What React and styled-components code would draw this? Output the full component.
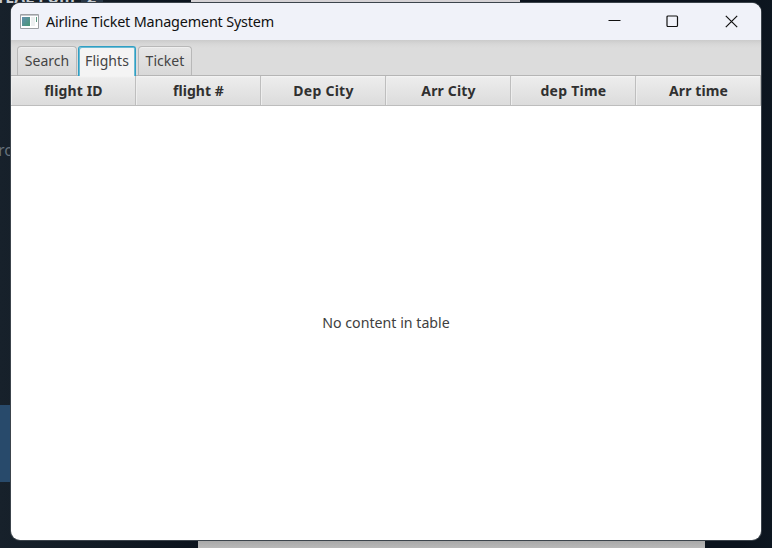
import React from "react";
import styled, { createGlobalStyle, css } from "styled-components";

const GlobalStyle = createGlobalStyle`
  * { box-sizing: border-box; }
  body {
    margin: 0;
    overflow: hidden;
    background: #111a23;
    font-family: "Noto Sans", "Open Sans", sans-serif;
  }
`;

const Desktop = styled.main`
  position: relative;
  width: 772px;
  height: 548px;
  padding: 3px 11px 8px;
  overflow: hidden;
  background: linear-gradient(90deg, #17212b 0, #121b24 100px, #0b131d 200px, #0b131d 740px, #0d1620 772px);
`;

const BackgroundPane = styled.div`
  position: absolute;
  left: ${(p) => p.$x}px;
  top: ${(p) => p.$y}px;
  width: ${(p) => p.$w}px;
  height: ${(p) => p.$h}px;
  background: ${(p) => p.$color};
`;

const BackgroundText = styled.span`
  position: absolute;
  left: ${(p) => p.$x}px;
  top: ${(p) => p.$y}px;
  color: ${(p) => p.$color};
  font: ${(p) => p.$weight} 16px/20px "Noto Sans", sans-serif;
  letter-spacing: ${(p) => p.$spacing || 0}px;
  white-space: nowrap;
`;

const Window = styled.section`
  position: relative;
  display: flex;
  flex-direction: column;
  width: 750px;
  height: 537px;
  overflow: hidden;
  background: #fff;
  border-radius: 9px;
  box-shadow: 0 0 0 1px #3c444c;
`;

const TitleBar = styled.header`
  display: flex;
  align-items: center;
  flex: 0 0 37px;
  padding-left: 9px;
  background: #f0f2f9;
`;

const Title = styled.h1`
  flex: 1;
  margin: 0 0 0 7px;
  color: #111;
  font-size: 14.4px;
  line-height: 20px;
  font-weight: 400;
  letter-spacing: ${(p) => p.$spacing}px;
  white-space: nowrap;
`;

const Controls = styled.div`
  display: flex;
  gap: 1px;
  padding-right: 1px;
`;

const ControlButton = styled.button`
  display: grid;
  place-items: center;
  width: 57.5px;
  height: 36px;
  padding: 0;
  border: 0;
  background: none;
  color: #111;
`;

const TabStrip = styled.nav`
  display: flex;
  align-items: flex-end;
  gap: 1px;
  flex: 0 0 36px;
  padding-left: 6px;
  border-bottom: 1px solid #b5b5b5;
  background: linear-gradient(#cbcbcb 0, #d7d7d7 4px, #dcdcdc 8px);
`;

const Tab = styled.button`
  display: flex;
  align-items: center;
  justify-content: center;
  width: ${(p) => p.$width}px;
  height: 29px;
  padding: 0 0 1px;
  border: 1px solid #b8b8b8;
  border-bottom: 0;
  border-radius: 4px 4px 0 0;
  background: linear-gradient(#e6e6e6, #d8d8d8);
  box-shadow: inset 0 1px #efefef;
  color: #444;
  font: 400 14px/20px "Noto Sans", sans-serif;
  letter-spacing: ${(p) => p.$spacing}px;
  white-space: nowrap;

  ${(p) =>
    p.$active &&
    css`
      height: 30px;
      margin-right: 1px;
      margin-bottom: -1px;
      padding-bottom: 2px;
      border-color: #2f9fc4;
      border-radius: 3px 3px 0 0;
      background: #f4f4f4;
      box-shadow: inset 1px 1px #6dbbd3, inset -1px 0 #6dbbd3;
    `}
`;

const Table = styled.div`
  display: flex;
  flex: 1;
  flex-direction: column;
`;

const TableHeader = styled.div`
  display: grid;
  grid-template-columns: repeat(6, 125px);
  height: 30px;
  border-bottom: 1px solid #bdbdbd;
  background: linear-gradient(#f5f5f5 0, #ececec 2px, #dcdcdc 100%);
`;

const ColumnHeader = styled.div`
  display: flex;
  align-items: center;
  justify-content: center;
  padding-left: 1px;
  border-right: 1px solid #bebebe;
  box-shadow: inset 1px 0 #eee;
  color: #303030;
  font-size: 14px;
  line-height: 20px;
  font-weight: 700;
  letter-spacing: ${(p) => p.$spacing}px;
`;

const Placeholder = styled.div`
  display: grid;
  flex: 1;
  place-items: center;
  color: #404040;
  font-size: 14.2px;
  line-height: 20px;
`;

function AppIcon() {
  return (
    <svg width="19" height="16" viewBox="0 0 19 16" aria-hidden="true">
      <defs>
        <linearGradient id="pane" x2="1" y2="1">
          <stop stopColor="#648fb0" />
          <stop offset="1" stopColor="#479774" />
        </linearGradient>
      </defs>
      <path d="M.5.5h18v14H.5z" fill="#fff" stroke="#9da0a4" />
      <path d="M1 1.5h17" stroke="#c5c8cc" />
      <path d="M2 3h8v9H2z" fill="url(#pane)" />
      <path d="M11 3h4v9h-4z" fill="#edf0f1" />
      <path d="M16.5 3v5" stroke="#5b9b83" />
    </svg>
  );
}

const columns = [
  ["flight ID", 0.15],
  ["flight #", 0.05],
  ["Dep City", 0.25],
  ["Arr City", 0.15],
  ["dep Time", 0.25],
  ["Arr time", 0.1],
];

export default function App() {
  return (
    <>
      <GlobalStyle />
      <Desktop>
        <BackgroundText $x={-4} $y={-13} $color="#c5cbd0" $weight={700}>TEAL FUm</BackgroundText>
        <BackgroundPane $x={81} $y={0} $w={22} $h={3} $color="#293746" />
        <BackgroundText $x={87} $y={-13} $color="#c5cbd0" $weight={700}>2</BackgroundText>
        <BackgroundPane $x={191} $y={0} $w={329} $h={3} $color="#d5d2d5" />
        <BackgroundText $x={-2} $y={140} $color="#65717b" $weight={400}>ro</BackgroundText>
        <BackgroundPane $x={0} $y={405} $w={11} $h={77} $color="#284a6b" />
        <BackgroundPane $x={198} $y={540} $w={507} $h={8} $color="linear-gradient(#a6a6a6, #b8b8b8)" />
        <Window>
          <TitleBar>
            <AppIcon />
            <Title $spacing={-0.18}>Airline Ticket Management System</Title>
            <Controls>
              <ControlButton aria-label="Minimize">
                <svg width="13" height="13" viewBox="0 0 13 13"><path d="M.5 5.5h12" stroke="currentColor" /></svg>
              </ControlButton>
              <ControlButton aria-label="Maximize">
                <svg width="13" height="13" viewBox="0 0 13 13"><rect x="1" y="1" width="10.5" height="10.5" rx="1" fill="none" stroke="currentColor" strokeWidth="1.2" /></svg>
              </ControlButton>
              <ControlButton aria-label="Close">
                <svg width="13" height="13" viewBox="0 0 13 13"><path d="m.8.8 11.4 11.4m0-11.4L.8 12.2" stroke="currentColor" strokeWidth="1.2" /></svg>
              </ControlButton>
            </Controls>
          </TitleBar>
          <TabStrip>
            <Tab $width={60} $spacing={0}>Search</Tab>
            <Tab $width={58} $spacing={0.05} $active>Flights</Tab>
            <Tab $width={54} $spacing={0.05}>Ticket</Tab>
          </TabStrip>
          <Table>
            <TableHeader>
              {columns.map(([label, spacing]) => (
                <ColumnHeader key={label} $spacing={spacing}>{label}</ColumnHeader>
              ))}
            </TableHeader>
            <Placeholder>No content in table</Placeholder>
          </Table>
        </Window>
      </Desktop>
    </>
  );
}
